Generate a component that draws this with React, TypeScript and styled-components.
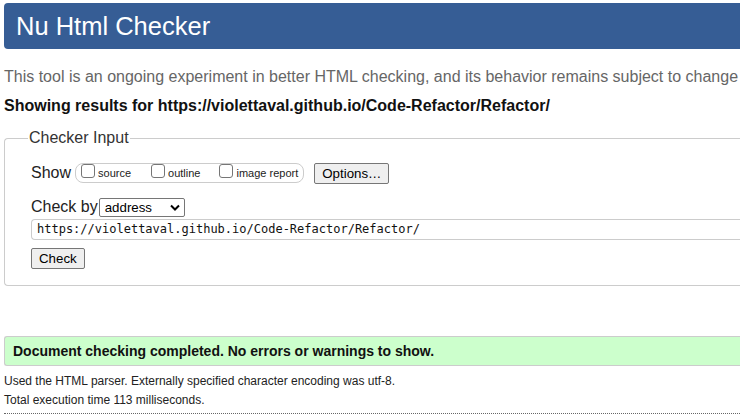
import React from "react";
import styled, { createGlobalStyle } from "styled-components";

const Global = createGlobalStyle`
  html, body { margin: 0; padding: 0; background: #fff; overflow: hidden; }
  body { font-family: "Liberation Sans", Arial, sans-serif; color: #000; }
`;

const Page = styled.div`
  width: 820px;
  padding: 3px 0 0 4px;
  box-sizing: border-box;
`;

const Header = styled.h1`
  margin: 0;
  height: 46px;
  background: #365d95;
  border-radius: 4px 0 0 4px;
  color: #fff;
  font-weight: normal;
  font-size: 25.5px;
  line-height: 46px;
  padding-left: 12px;
`;

const Intro = styled.p`
  margin: 19px 0 0;
  font-size: 16px;
  line-height: 18px;
  color: #666;
  white-space: nowrap;
`;

const Showing = styled.h2`
  margin: 11px 0 0;
  font-size: 16px;
  line-height: 18px;
  font-weight: bold;
  color: #111;
`;

const Fieldset = styled.fieldset`
  margin: 14px 0 0;
  padding: 15px 0 16px 26px;
  border: 1px solid #ccc;
  border-right: none;
  border-radius: 4px 0 0 4px;
  min-height: 0;
`;

const Legend = styled.legend`
  font-size: 16px;
  color: #333;
  padding: 0 1px;
  margin-left: -3px;
`;

const Row = styled.div<{ $mt: number }>`
  display: flex;
  align-items: center;
  height: 22px;
  margin-top: ${(p) => p.$mt}px;
`;

const Label = styled.span<{ $mr?: number }>`
  font-size: 16px;
  color: #222;
  margin-right: ${(p) => p.$mr ?? 4}px;
`;

const CheckGroup = styled.span`
  display: inline-flex;
  align-items: center;
  height: 18px;
  border: 1px solid #ccc;
  border-radius: 8px;
  padding: 0 5px;
`;

const Opt = styled.label<{ $mr: number }>`
  display: inline-flex;
  align-items: center;
  font-size: 11px;
  color: #222;
  margin-right: ${(p) => p.$mr}px;
`;

const Box = styled.span`
  width: 12px;
  height: 12px;
  border: 1px solid #767676;
  border-radius: 3px;
  margin: 0 3px 0 0;
  background: #fff;
  position: relative;
  top: -2px;
`;

const Button = styled.button<{ $ml?: number }>`
  font-family: "Liberation Sans", Arial, sans-serif;
  font-size: 13.3px;
  height: 21px;
  padding: 0 7px;
  background: #efefef;
  border: 1px solid #767676;
  border-radius: 2px;
  color: #000;
  margin-left: ${(p) => p.$ml ?? 0}px;
`;

const Select = styled.span`
  display: inline-flex;
  align-items: center;
  justify-content: space-between;
  width: 86px;
  height: 19px;
  box-sizing: border-box;
  border: 1px solid #767676;
  border-radius: 2px;
  padding: 0 4px 0 5px;
  font-size: 13.3px;
  margin-left: -1px;
`;

const UrlInput = styled.div`
  margin-top: 1px;
  height: 21px;
  box-sizing: border-box;
  border: 1px solid #ccc;
  border-right: none;
  border-radius: 4px 0 0 4px;
  padding-left: 5px;
  font-family: "DejaVu Sans Mono", "Liberation Mono", monospace;
  font-size: 12px;
  line-height: 19px;
  color: #111;
`;

const Success = styled.div`
  margin-top: 50px;
  height: 30px;
  box-sizing: border-box;
  background: #ccffcc;
  border: 1px solid #ccc;
  border-right: none;
  border-radius: 3px 0 0 3px;
  padding-left: 8px;
  font-size: 14px;
  font-weight: bold;
  line-height: 28px;
  color: #111;
`;

const Detail = styled.p<{ $mt: number }>`
  margin: ${(p) => p.$mt}px 0 0;
  font-size: 12px;
  line-height: 14px;
  color: #222;
`;

const Dotted = styled.hr`
  margin: 6px 0 0;
  border: none;
  border-top: 1px dotted #666;
  height: 0;
`;

export default function App() {
  return (
    <>
      <Global />
      <Page>
        <Header>Nu Html Checker</Header>
        <Intro>
          This tool is an ongoing experiment in better HTML checking, and its behavior remains subject to change
        </Intro>
        <Showing>Showing results for https://violettaval.github.io/Code-Refactor/Refactor/</Showing>
        <Fieldset>
          <Legend>Checker Input</Legend>
          <Row $mt={0}>
            <Label>Show</Label>
            <CheckGroup>
              <Opt $mr={20}><Box />source</Opt>
              <Opt $mr={19}><Box />outline</Opt>
              <Opt $mr={0}><Box />image report</Opt>
            </CheckGroup>
            <Button $ml={10}>Options…</Button>
          </Row>
          <Row $mt={12}>
            <Label $mr={2}>Check by</Label>
            <Select>
              <span>address</span>
              <svg width="10" height="7" viewBox="0 0 10 7">
                <path d="M1 1.5 L5 5.5 L9 1.5" fill="none" stroke="#000" strokeWidth="2" />
              </svg>
            </Select>
          </Row>
          <UrlInput>https://violettaval.github.io/Code-Refactor/Refactor/</UrlInput>
          <Row $mt={7}>
            <Button>Check</Button>
          </Row>
        </Fieldset>
        <Success>Document checking completed. No errors or warnings to show.</Success>
        <Detail $mt={8}>Used the HTML parser. Externally specified character encoding was utf-8.</Detail>
        <Detail $mt={5}>Total execution time 113 milliseconds.</Detail>
        <Dotted />
      </Page>
    </>
  );
}
